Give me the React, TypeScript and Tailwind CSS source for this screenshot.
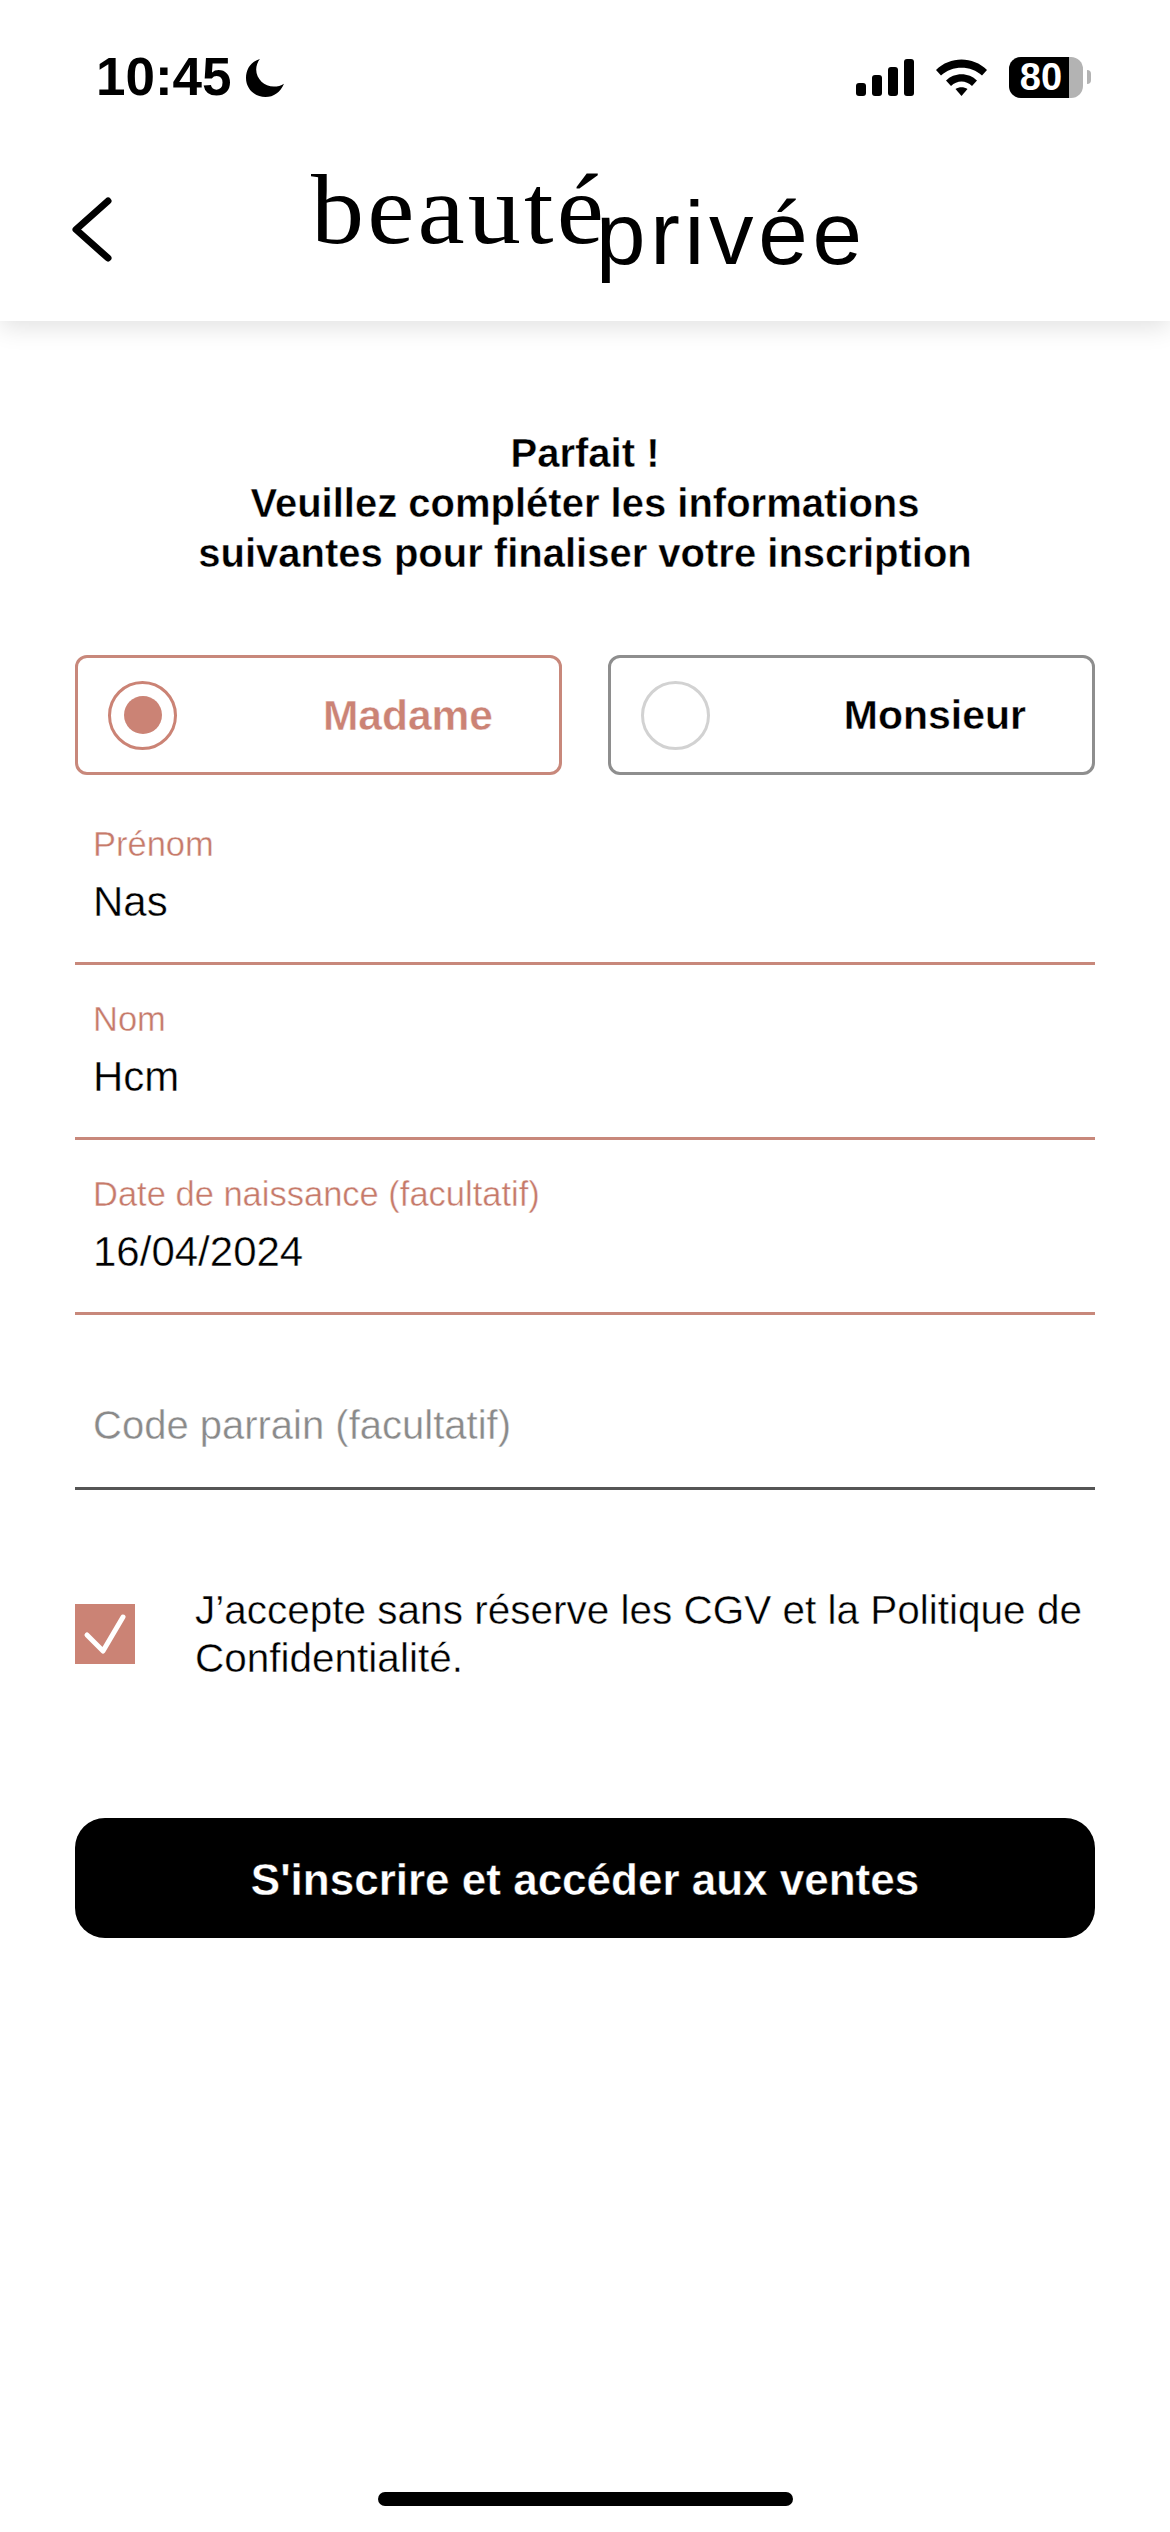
import React from 'react';

const SANS = "font-['Liberation_Sans',Arial,sans-serif]";
// Liberation has no light weight, a thin white stroke gets close to the reference's light text
const LIGHT = "font-['Liberation_Sans',Arial,sans-serif] [-webkit-text-stroke:0.4px_white]";

const StatusBar = () => {
  return (
    <div className="flex items-center justify-between h-[60px] mt-[47px] pl-[96px] pr-[79px]">
      <div className="flex items-center">
        <span className={`${SANS} text-[53px] leading-[60px] font-bold text-black`}>10:45</span>
        <svg className="ml-[14px]" width="38" height="39" viewBox="0 0 41 41" preserveAspectRatio="none">
          <path d="M15 1 C5 4 0 12 0 21 C0 32 9 41 21 41 C30 41 37 36 41 27 C38 29 34 30 30 30 C20 30 11 22 11 12 C11 8 12.500 4 15 1 Z" fill="#000" />
        </svg>
      </div>
      <div className="flex items-center">
        <svg width="58" height="37" viewBox="0 0 58 37">
          <rect x="0" y="24" width="10" height="13" rx="3" fill="#000" />
          <rect x="16" y="16" width="10" height="21" rx="3" fill="#000" />
          <rect x="32" y="8" width="10" height="29" rx="3" fill="#000" />
          <rect x="48" y="0" width="10" height="37" rx="3" fill="#000" />
        </svg>
        <svg className="ml-[22px]" width="51" height="37" viewBox="0 0 51 37">
          <path d="M0 11 C14 -3 37 -3 51 11 L46 16.500 C35 6 16 6 5 16.500 Z" fill="#000" />
          <path d="M10 21.500 C18 13 33 13 41 21.500 L36 27 C30 21 21 21 15 27 Z" fill="#000" />
          <path d="M19.500 30 C23 27.500 28 27.500 31.500 30 L25.500 37 Z" fill="#000" />
        </svg>
        <div className="ml-[22px] w-[74px] h-[41px] rounded-[12px] bg-[#b3b3b3] overflow-hidden">
          <div className="h-full w-[60px] bg-black flex items-center justify-center pl-[4px]">
            <span className={`${SANS} text-[38px] leading-[41px] font-bold text-white`}>80</span>
          </div>
        </div>
        <div className="ml-[4px] w-[4px] h-[14px] rounded-r-full bg-[#b3b3b3]" />
      </div>
    </div>
  );
};

const Logo = () => {
  return (
    <svg className="ml-[199px] mt-[53px] overflow-visible" width="570" height="130" viewBox="0 0 570 130">
      <text
        x="0"
        y="83"
        textLength="296"
        lengthAdjust="spacingAndGlyphs"
        fontSize="100"
        letterSpacing="3"
        className="font-['Liberation_Serif',serif] [-webkit-text-stroke:1px_white]"
        fill="#000"
      >
        beauté
      </text>
      <text
        x="285"
        y="104"
        textLength="266"
        lengthAdjust="spacing"
        fontSize="89"
        className={`${SANS} [-webkit-text-stroke:1.6px_black]`}
        fill="#000"
      >
        privée
      </text>
    </svg>
  );
};

const Header = () => {
  return (
    <div className="h-[321px] bg-white shadow-[0_6px_24px_rgba(0,0,0,0.12)]">
      <StatusBar />
      <div className="flex items-start pl-[72px]">
        <svg className="mt-[90px]" width="40" height="65" viewBox="0 0 40 65" fill="none" stroke="#000" strokeWidth="7" strokeLinecap="round" strokeLinejoin="round">
          <path d="M36 4 L4 32.500 L36 61" />
        </svg>
        <Logo />
      </div>
    </div>
  );
};

type RadioProps = { label: string; selected?: boolean };

const RadioCard = ({ label, selected }: RadioProps) => {
  return (
    <div
      className={`flex items-center w-[487px] h-[120px] rounded-[12px] border-[3px] pl-[30px] pr-[66px] ${
        selected ? 'border-[#c8887b]' : 'border-[#8e8e8e]'
      }`}
    >
      <div
        className={`flex items-center justify-center w-[69px] h-[69px] rounded-full border-[3px] ${
          selected ? 'border-[#cb8375]' : 'border-[#d2d2d2]'
        }`}
      >
        {selected && <div className="w-[38px] h-[38px] rounded-full bg-[#cb8375]" />}
      </div>
      <span
        className={`ml-auto mt-[2px] ${SANS} [-webkit-text-stroke:0.4px_white] font-bold ${
          selected ? 'text-[42.500px] text-[#cb8375]' : 'text-[41px] text-black'
        }`}
      >
        {label}
      </span>
    </div>
  );
};

type FieldProps = { label: string; value?: string };

const Field = ({ label, value }: FieldProps) => {
  if (!value) {
    return (
      <div className="h-[175px] border-b-[3px] border-[#555555] pl-[18px] pt-[87px]">
        <div className={`${LIGHT} text-[40px] leading-[46px] text-[#8a8a8a]`}>{label}</div>
      </div>
    );
  }
  return (
    <div className="h-[175px] border-b-[3px] border-[#c8887b] pl-[18px] pt-[34px]">
      <div className={`${LIGHT} text-[34.500px] leading-[40px] text-[#c67a6a]`}>{label}</div>
      <div className={`mt-[18px] ${LIGHT} text-[42px] leading-[40px] text-black`}>{value}</div>
    </div>
  );
};

export default function App() {
  return (
    <div className="flex flex-col min-h-[2532px] bg-white">
      <Header />
      <div className="flex flex-col flex-1 px-[75px]">
        <h1 className={`mt-[107px] text-center ${SANS} [-webkit-text-stroke:0.4px_white] text-[40px] leading-[50px] font-bold text-black`}>
          Parfait !<br />
          Veuillez compléter les informations<br />
          suivantes pour finaliser votre inscription
        </h1>

        <div className="flex justify-between mt-[77px]">
          <RadioCard label="Madame" selected />
          <RadioCard label="Monsieur" />
        </div>

        <div className="flex flex-col mt-[15px]">
          <Field label="Prénom" value="Nas" />
          <Field label="Nom" value="Hcm" />
          <Field label="Date de naissance (facultatif)" value="16/04/2024" />
          <Field label="Code parrain (facultatif)" />
        </div>

        <div className="flex items-center mt-[96px]">
          <div className="w-[60px] h-[60px] bg-[#cb8375] shrink-0">
            <svg width="60" height="60" viewBox="0 0 60 60" fill="none" stroke="#fff" strokeWidth="5" strokeLinecap="round" strokeLinejoin="round">
              <path d="M12 31 L28 47 L48 13" />
            </svg>
          </div>
          <p className={`ml-[60px] ${LIGHT} text-[40.500px] leading-[48px] text-black`}>
            J’accepte sans réserve les CGV et la Politique de Confidentialité.
          </p>
        </div>

        <button className={`mt-[136px] h-[120px] pt-[3px] rounded-[30px] bg-black text-white ${SANS} [-webkit-text-stroke:0.4px_black] text-[44px] font-bold`}>
          S'inscrire et accéder aux ventes
        </button>

        <div className="mt-auto mb-[26px] mx-auto w-[415px] h-[14px] rounded-full bg-black" />
      </div>
    </div>
  );
}
